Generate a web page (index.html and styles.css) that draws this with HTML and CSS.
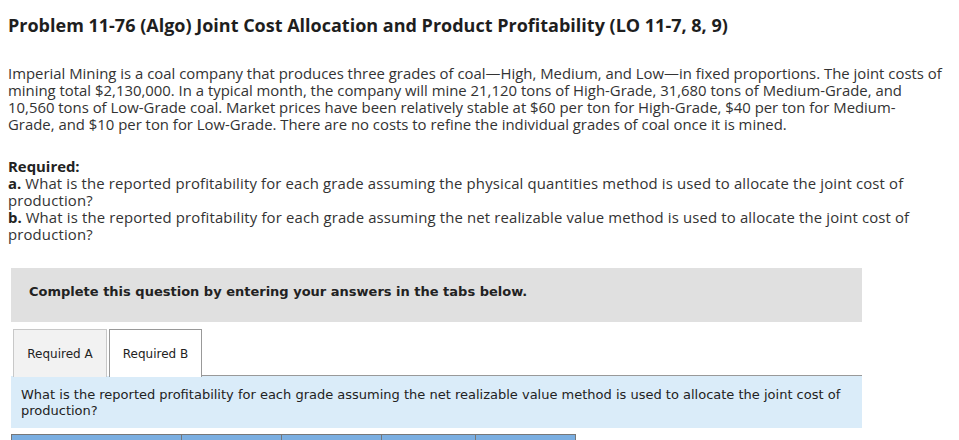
FILE: index.html
```html
<!DOCTYPE html>
<html>
<head>
<meta charset="utf-8">
<link rel="stylesheet" href="styles.css">
</head>
<body>
<h1 class="title">Problem 11-76 (Algo) Joint Cost Allocation and Product Profitability (LO 11-7, 8, 9)</h1>
<p class="intro">Imperial Mining is a coal company that produces three grades of coal—High, Medium, and Low—in fixed proportions. The joint costs of<br>mining total $2,130,000. In a typical month, the company will mine 21,120 tons of High-Grade, 31,680 tons of Medium-Grade, and<br>10,560 tons of Low-Grade coal. Market prices have been relatively stable at $60 per ton for High-Grade, $40 per ton for Medium-<br>Grade, and $10 per ton for Low-Grade. There are no costs to refine the individual grades of coal once it is mined.</p>
<div class="required">
  <div class="req-head">Required:</div>
  <div class="req-item"><b>a.</b> What is the reported profitability for each grade assuming the physical quantities method is used to allocate the joint cost of<br>production?</div>
  <div class="req-item"><b>b.</b> What is the reported profitability for each grade assuming the net realizable value method is used to allocate the joint cost of<br>production?</div>
</div>
<div class="panel">
  <div class="notice">Complete this question by entering your answers in the tabs below.</div>
  <div class="tabs">
    <div class="tab">Required A</div>
    <div class="tab active">Required B</div>
    <div class="tab-rest"></div>
  </div>
  <div class="prompt">What is the reported profitability for each grade assuming the net realizable value method is used to allocate the joint cost of<br>production?</div>
  <div class="table-head">
    <div class="col c1"></div>
    <div class="col c2"></div>
    <div class="col c3"></div>
    <div class="col c4"></div>
    <div class="col c5"></div>
  </div>
</div>
</body>
</html>
```
FILE: styles.css
```css
html, body {
  margin: 0;
  padding: 0;
  background: #fff;
}
body {
  padding: 0 8px;
  font-family: "Open Sans", Lato, sans-serif;
  color: #333;
  overflow: hidden;
  height: 440px;
}
.title {
  margin: 15px 0 0;
  font-size: 18px;
  line-height: 20px;
  font-weight: 700;
  color: #1e1e1e;
  white-space: nowrap;
}
.intro {
  margin: 30px 0 0;
  font-size: 14.9px;
  line-height: 17px;
  white-space: nowrap;
}
.required {
  margin-top: 25px;
  font-size: 14.9px;
  line-height: 17px;
  white-space: nowrap;
}
.req-item {
  letter-spacing: 0.15px;
}
.req-head, .required b {
  font-weight: 700;
  color: #222;
  letter-spacing: 0;
}
.panel {
  margin: 25px 0 0 3px;
  width: 851px;
  font-family: "DejaVu Sans", Verdana, sans-serif;
}
.notice {
  background: #e0e0e0;
  height: 54px;
  box-sizing: border-box;
  padding: 16px 0 0 18px;
  font-size: 13px;
  font-weight: 700;
  color: #222;
}
.tabs {
  display: flex;
  margin-top: 7px;
  height: 47px;
  padding-left: 2px;
}
.tab {
  box-sizing: border-box;
  width: 94px;
  height: 48px;
  border: 1px solid #c8c8c8;
  border-bottom: none;
  background: #f2f2f2;
  font-size: 12px;
  color: #222;
  display: flex;
  align-items: center;
  justify-content: center;
}
.tab.active {
  margin-left: 2px;
  width: 93px;
  background: #fff;
  border-color: #999;
  position: relative;
  z-index: 1;
}
.tab-rest {
  flex: 1;
  border-bottom: 1px solid #999;
}
.prompt {
  background: #daecf9;
  height: 52px;
  box-sizing: border-box;
  padding: 11px 10px 0;
  font-size: 13px;
  line-height: 16px;
  color: #222;
  white-space: nowrap;
}
.table-head {
  display: flex;
  margin-top: 6px;
  height: 20px;
}
.col {
  box-sizing: border-box;
  background: #7aaee1;
  border: 1px solid #777;
  border-left: none;
}
.c1 { width: 171px; border-left: 1px solid #777; }
.c2 { width: 100px; }
.c3 { width: 100px; }
.c4 { width: 94px; }
.c5 { width: 100px; }
```
